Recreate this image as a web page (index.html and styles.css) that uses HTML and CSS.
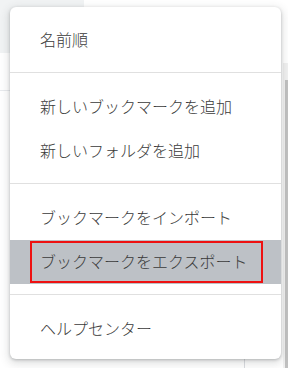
FILE: index.html
```html
<!DOCTYPE html>
<html>
<head>
    <title>ブックマーク メニュー</title>
    <link rel="stylesheet" href="styles.css">
</head>
<body>
    <div class="page">
        <div class="toolbar"></div>
        <div class="list-rule"></div>
        <div class="column-rule"></div>
        <div class="scrollbar"><div class="thumb"></div></div>
    </div>

    <div class="menu">
        <div class="menu-item">名前順</div>
        <div class="separator"></div>
        <div class="menu-item">新しいブックマークを追加</div>
        <div class="menu-item">新しいフォルダを追加</div>
        <div class="separator"></div>
        <div class="menu-item">ブックマークをインポート</div>
        <div class="menu-item active"><span class="marked">ブックマークをエクスポート</span></div>
        <div class="separator"></div>
        <div class="menu-item">ヘルプセンター</div>
    </div>
</body>
</html>
```

FILE: styles.css
```css
body {
    margin: 0;
    background: #fff;
    font-family: "Noto Sans CJK JP", "Noto Sans", sans-serif;
    overflow: hidden;
}
.page {
    position: relative;
    width: 288px;
    height: 368px;
}
.toolbar {
    width: 84px;
    height: 53px;
    background: #f1f3f4;
    border-bottom-right-radius: 4px;
}
.list-rule {
    position: absolute;
    left: 0;
    top: 90px;
    width: 12px;
    height: 1px;
    background: #e8eaed;
}
.column-rule {
    position: absolute;
    left: 244px;
    top: 340px;
    width: 1px;
    height: 28px;
    background: #dadce0;
}
.scrollbar {
    position: absolute;
    right: 0;
    top: 63px;
    width: 5px;
    bottom: 0;
    background: #f1f1f1;
}
.scrollbar .thumb {
    margin: 17px 0 0 2px;
    height: 300px;
    background: #c1c1c1;
}

/* popup menu */
.menu {
    position: absolute;
    left: 10px;
    top: 7px;
    width: 271px;
    height: 352px;
    box-sizing: border-box;
    padding: 11px 0 8px;
    background: #fff;
    border-radius: 6px;
    box-shadow: 0 1px 3px rgba(60, 64, 67, 0.3), 0 3px 8px 2px rgba(60, 64, 67, 0.15);
}
.menu-item {
    display: flex;
    align-items: center;
    box-sizing: border-box;
    height: 44px;
    padding: 0 0 2px 30px;
    font-size: 16px;
    font-weight: 300;
    color: #3a3a3a;
    white-space: nowrap;
}
.menu-item.active {
    padding-bottom: 0;
    background: #bdc1c6;
}
.marked {
    display: flex;
    align-items: center;
    box-sizing: border-box;
    height: 42px;
    margin-left: -10px;
    padding: 0 13px 2px 8px;
    border: 2px solid #ee1111;
}
.separator {
    height: 1px;
    margin: 10px 0 12px;
    background: #e0e0e0;
}
```
